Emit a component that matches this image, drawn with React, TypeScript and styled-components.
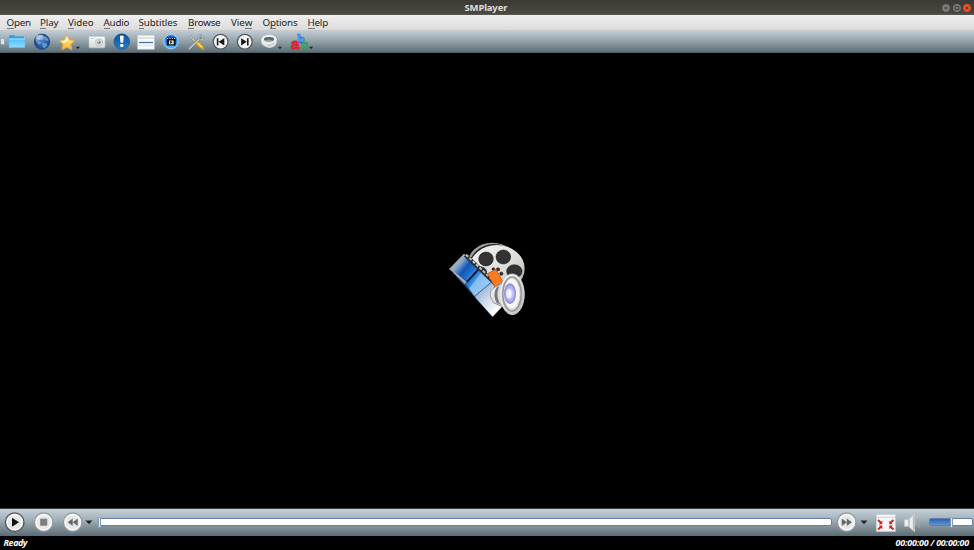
import React from "react";
import styled, { createGlobalStyle } from "styled-components";

const Global = createGlobalStyle`
  * { box-sizing: border-box; }
  body { margin: 0; background: #000; overflow: hidden; }
`;

const Window = styled.div`
  width: 974px;
  height: 550px;
  display: grid;
  grid-template-rows: 15px 16px 22px 455px 28px 14px;
  background: #000;
  font-family: "Noto Sans", "Open Sans", sans-serif;
`;
const TitleBar = styled.header`
  display: grid;
  grid-template-columns: 1fr auto 1fr;
  align-items: center;
  background: linear-gradient(#3b3934, #4a4841 88%, #5b5954);
`;
const Title = styled.h1`
  margin: 0;
  width: 45px;
  font: bold 9.5px/14px "Noto Sans", sans-serif;
  letter-spacing: -0.15px;
  white-space: nowrap;
  color: #e2ded6;
`;
const WindowButtons = styled.div`
  display: flex;
  justify-content: flex-end;
  gap: 0.5px;
  padding-right: 2px;
`;
const MenuBar = styled.nav`
  display: flex;
  padding-left: 6.5px;
  background: linear-gradient(#efefef, #dcdcdc);
  border-bottom: 1px solid #c7c9ca;
`;
const MenuItem = styled.span<{ $w: number; $ls: number }>`
  width: ${(p) => p.$w}px;
  flex: none;
  letter-spacing: ${(p) => p.$ls}px;
  font-size: 9.8px;
  line-height: 15px;
  white-space: nowrap;
  color: #1c1c1c;
`;
const Key = styled.span`
  box-shadow: 0 -1px 0 #777 inset;
  display: inline-block;
  line-height: 13px;
  height: 13px;
`;
const ToolBar = styled.div`
  display: flex;
  align-items: center;
  background: linear-gradient(#c0ccd5, #a5b2ba 30%, #5f6f77);
  border-bottom: 1px solid #4b5b63;
`;
const Grip = styled.div`
  width: 6px;
  height: 7px;
  padding: 1px 0 0 1px;
  &::before {
    content: "";
    display: block;
    width: 3px;
    height: 5px;
    background: #dfe4e7;
    border: solid #98a4ab;
    border-width: 0 1px 1px 0;
  }
`;
const ToolButton = styled.div<{ $w: number }>`
  width: ${(p) => p.$w}px;
  height: 20px;
  flex: none;
  svg { display: block; overflow: visible; }
`;
const Screen = styled.main`
  background: #000;
  padding: 183px 0 0 440px;
  svg { display: block; }
`;
const ControlBar = styled.div`
  display: flex;
  align-items: center;
  padding-left: 3px;
  border-top: 1px solid #343c41;
  background: linear-gradient(#c5d1da, #a7b4bc 35%, #5c6c74);
  svg { display: block; flex: none; }
`;
const Space = styled.div<{ $w: number }>`
  width: ${(p) => p.$w}px;
  flex: none;
`;
const SeekTrack = styled.div`
  width: 734px;
  height: 8px;
  margin-top: -1px;
  background: #fff;
  border: 1px solid #667da6;
  border-radius: 2px;
  display: flex;
  align-items: center;
  flex: none;
`;
const Thumb = styled.div`
  width: 3px;
  height: 11px;
  flex: none;
  border: 1px solid #8198b5;
  border-radius: 2px;
  background: #e3edf8;
`;
const SeekThumb = styled(Thumb)`margin-left: -1px;`;
const VolumeTrack = styled(SeekTrack)`
  width: 44px;
  background: linear-gradient(90deg, transparent 0 21px, #fff 21px), linear-gradient(#2e62ad, #5f93d8);
  padding-left: 20px;
`;
const StatusBar = styled.footer`
  display: flex;
  justify-content: space-between;
  padding: 0 5px 0 3.5px;
  color: #fff;
  font: italic bold 8.9px/13px "Noto Sans", sans-serif;
`;
const Ready = styled.span`letter-spacing: -0.4px;`;
const Time = styled.span`letter-spacing: -0.2px; white-space: pre;`;

const menus: [string, number, number, number][] = [
  ["Open", 33.5, 0, -0.25], ["Play", 28, 0, -0.15], ["Video", 35.5, 0, -0.05],
  ["Audio", 35, 0, -0.22], ["Subtitles", 49.5, 0, -0.12], ["Browse", 43, 0, -0.25],
  ["View", 31.5, 3, -0.1], ["Options", 45, 1, -0.22], ["Help", 25, 0, -0.22],
];

const Arrow = ({ x = 20 }: { x?: number }) => <path d={`M${x} 14.8h4l-2 2.5z`} fill="#20272b" />;

const Folder = () => (
  <>
    <path d="M3 4.5q0-1.2 1.2-1.2h4l1 1.2h8.8v10H3z" fill="#2f9ce4" />
    <path d="M2.3 6.5h17.4l-.8 9.2H3.2z" fill="url(#folder)" stroke="#48a8ea" strokeWidth=".5" />
    <path d="M3 7h16" stroke="#a8e4ff" />
  </>
);
const Globe = () => (
  <>
    <circle cx="11" cy="9.7" r="7.8" fill="url(#globe)" stroke="#244776" strokeWidth=".6" />
    <path d="M4 7l3-3.6 4-.8 1 2.2-3 1-1 2.4 2 2-1 2.4-2-.5-2-2.6zM13 4l3 1.2 1.8 3-2 1-1.6-1.6-1.5.4zM12 11l3.7.5.7 2-3.2 3.2-1.6-2z" fill="#90b7df" opacity=".6" />
    <ellipse cx="9" cy="5.5" rx="4" ry="2.4" fill="#fff" opacity=".5" />
  </>
);
const Star = () => (
  <>
    <path d="M11 2.5l2.5 5.2 5.4.8-4 3.9 1 5.4-4.9-2.6-5 2.6 1.1-5.4-4-3.9 5.4-.8z" fill="url(#star)" stroke="#e2a744" strokeWidth="1" strokeLinejoin="round" />
    <path d="M10.7 4.7L9 8.8l-4 .7 3 1.6 4-2.6z" fill="#fff" opacity=".7" />
    <Arrow />
  </>
);
const Camera = () => (
  <>
    <rect x="3" y="4.5" width="16" height="11.3" rx="1" fill="url(#silver)" stroke="#c4c9cc" strokeWidth=".6" />
    <rect x="4.5" y="6" width="3.5" height="1" fill="#cbd0d3" />
    <circle cx="13" cy="10.3" r="3.5" fill="#dfe1e2" stroke="#bdc1c3" />
    <circle cx="13" cy="10.3" r="1.8" fill="#85898d" />
    <circle cx="12.4" cy="9.6" r=".8" fill="#ddd" />
  </>
);
const Info = () => (
  <>
    <circle cx="10.8" cy="9.6" r="7.8" fill="url(#info)" stroke="#145597" strokeWidth=".7" />
    <path d="M8.9 4q1.9-1 3.8 0l-.5 6.3q-1.4.8-2.8 0z" fill="#fff" />
    <circle cx="10.8" cy="13.4" r="1.7" fill="#fff" />
  </>
);
const Playlist = () => (
  <>
    <rect x="2.7" y="3.2" width="16.6" height="14" fill="#f7f8fa" stroke="#c6cdd4" strokeWidth=".5" />
    <path d="M3 6h16" stroke="#c6cbd0" />
    <path d="M4 10.5h14" stroke="#416da8" strokeWidth="1.2" />
    <path d="M4 13.3h14" stroke="#dce0e4" />
  </>
);
const FilmInfo = () => (
  <>
    <circle cx="11" cy="9.7" r="7.2" fill="url(#filmDisc)" stroke="#9bd3f9" />
    <path d="M6.7 6.8l1-2 1.2 1.4 1.2-1.8 1.2 1.8 1.4-1.8 1 1.8 1.5-1 .5 1.6v6.8h-9z" fill="#071016" />
    <path d="M7.2 6.5h8.3" stroke="#fff" strokeDasharray="1 1.3" />
    <path d="M9 8.5h4.7v3.8H9z" fill="#e8f2f8" />
    <path d="M10.2 8.5l2.3 1.7-2.3 1.8z" fill="#071016" />
  </>
);
const Tools = () => (
  <>
    <path d="M4 3.4l10.4 10.2" stroke="#62686b" strokeWidth="2" />
    <path d="M4 3.4l10.4 10.2" stroke="#d9dddd" strokeWidth="1.2" />
    <path d="M4 17.3L15.5 6.2" stroke="#70777a" strokeWidth="2.4" strokeLinecap="round" />
    <path d="M4 17L15.3 6.2" stroke="#d1d5d6" strokeWidth="1.3" />
    <path d="M12.6 11.4l5 4.6" stroke="#d3a021" strokeWidth="3.4" strokeLinecap="round" />
    <path d="M12.4 10.9l4.7 4.4" stroke="#ffda4b" strokeWidth="1.7" />
    <path d="M17 2.6l-2.8 2.2.2 2.3 2.3.1L19 4.6q.5 4-3.3 4.2-3.5-.6-3-4 1-2.7 4.3-2.2z" fill="#c8cdcf" stroke="#757c80" strokeWidth=".5" />
  </>
);
const Skip = ({ next = false }: { next?: boolean }) => (
  <g transform={next ? "translate(21.8 0) scale(-1 1)" : "translate(-.4 0)"}>
    <circle cx="11" cy="9.7" r="7.4" fill="#f3f3f2" stroke="#575c5f" strokeWidth="1.3" />
    <path d="M8 6.2v7.2" stroke="#16191c" strokeWidth="1.6" />
    <path d="M14.7 6.2v7.2L9 9.8z" fill="#16191c" />
  </g>
);
const Ring = () => (
  <>
    <path d="M3.3 7.2v2.6q.7 4.2 6 5.8 4.5 1 7.5-1.5 2.2-2.3 1.7-6.9z" fill="url(#silver)" />
    <ellipse cx="11" cy="7.5" rx="7.7" ry="4.7" fill="#eceded" />
    <ellipse cx="11" cy="7.3" rx="5" ry="2.3" fill="#5b6165" />
    <path d="M7 8.4q4-2 8 0-4 2.1-8 0z" fill="#9aa1a4" />
    <path d="M10 13.2q4 .3 6.5-2" fill="none" stroke="#b2b8bb" strokeWidth=".8" />
    <Arrow />
  </>
);
const LetterA = styled.text`font: bold 15px "Liberation Sans", sans-serif;`;
const LetterB = styled.text`font: bold 13px "Liberation Serif", serif;`;
const LetterC = styled.text`font: bold 12px "Liberation Sans", sans-serif;`;
const Letters = () => (
  <>
    <LetterB x="8.2" y="10.8" fill="#78b6ff" stroke="#2369cf" strokeWidth=".7">b</LetterB>
    <LetterC x="12.2" y="16.8" fill="#60d278" stroke="#208c3a" strokeWidth=".7">c</LetterC>
    <LetterA x="2" y="17.4" fill="#f02c34" stroke="#d3202b" strokeWidth=".8">a</LetterA>
    <Arrow x={20} />
  </>
);

const tools = [
  { w: 25, icon: <Folder /> }, { w: 25, icon: <Globe /> }, { w: 30, icon: <Star /> },
  { w: 24.5, icon: <Camera /> }, { w: 24.5, icon: <Info /> }, { w: 25, icon: <Playlist /> },
  { w: 25, icon: <FilmInfo /> }, { w: 24.5, icon: <Tools /> }, { w: 24.5, icon: <Skip /> },
  { w: 24, icon: <Skip next /> }, { w: 31, icon: <Ring /> }, { w: 24, icon: <Letters /> },
];

const Defs = () => (
  <defs>
    <linearGradient id="folder" x2="0" y2="1"><stop stopColor="#4fbdfb" /><stop offset="1" stopColor="#92d9ff" /></linearGradient>
    <radialGradient id="globe"><stop stopColor="#4f88ce" /><stop offset="1" stopColor="#15458c" /></radialGradient>
    <linearGradient id="star" x2="0" y2="1"><stop stopColor="#fff4b5" /><stop offset="1" stopColor="#ffb325" /></linearGradient>
    <linearGradient id="silver" x2="0" y2="1"><stop stopColor="#fafafa" /><stop offset="1" stopColor="#d4d7d7" /></linearGradient>
    <linearGradient id="info" x2="0" y2="1"><stop stopColor="#125199" /><stop offset="1" stopColor="#1f7fc9" /></linearGradient>
    <linearGradient id="filmDisc" x2="0" y2="1"><stop stopColor="#1c6ee0" /><stop offset="1" stopColor="#55bbff" /></linearGradient>
  </defs>
);

const WinIcon = ({ kind }: { kind: "min" | "max" | "close" }) => (
  <svg width="10" height="10" viewBox="0 0 10 10">
    <circle cx="5" cy="5" r="4.3" fill={kind === "close" ? "#ee5427" : "#7c7b76"} stroke="#33312c" strokeWidth=".5" />
    {kind === "min" && <path d="M3 5h4" stroke="#3c3a35" />}
    {kind === "max" && <rect x="3.2" y="3.4" width="3.6" height="3.2" fill="none" stroke="#3c3a35" strokeWidth=".8" />}
    {kind === "close" && <path d="M3.5 3.5l3 3m0-3l-3 3" stroke="#6b2914" />}
  </svg>
);

const Logo = () => (
  <svg width="96" height="88" viewBox="0 0 288 264">
    <defs>
      <linearGradient id="reel" x2="1" y2="1"><stop stopColor="#f7f7f4" /><stop offset=".6" stopColor="#dadad7" /><stop offset="1" stopColor="#999" /></linearGradient>
      <linearGradient id="frameOne" x1="40" y1="75" x2="105" y2="128" gradientUnits="userSpaceOnUse"><stop stopColor="#d0dae2" /><stop offset=".25" stopColor="#7ba2cc" /><stop offset=".5" stopColor="#1155b6" /><stop offset=".8" stopColor="#2478d6" /><stop offset="1" stopColor="#4ba5f2" /></linearGradient>
      <linearGradient id="frameTwo" x1="83" y1="128" x2="145" y2="175" gradientUnits="userSpaceOnUse"><stop stopColor="#1466c9" /><stop offset=".25" stopColor="#3b8ee6" /><stop offset=".3" stopColor="#83bdf2" /><stop offset="1" stopColor="#a5cef5" /></linearGradient>
      <linearGradient id="frameThree" x1="110" y1="175" x2="165" y2="230" gradientUnits="userSpaceOnUse"><stop stopColor="#9bb8de" /><stop offset=".5" stopColor="#d5e0ec" /><stop offset="1" stopColor="#fff" /></linearGradient>
      <radialGradient id="cone"><stop stopColor="#fff" /><stop offset=".4" stopColor="#cccaff" /><stop offset="1" stopColor="#8b8ad5" /></radialGradient>
      <linearGradient id="speaker" x2="1" y2="1"><stop stopColor="#fff" /><stop offset="1" stopColor="#b8b8b8" /></linearGradient>
    </defs>
    <ellipse cx="157" cy="86" rx="75" ry="66" fill="#a0a09d" />
    <ellipse cx="163" cy="90" rx="75" ry="66" fill="#222" />
    <ellipse cx="171" cy="98" rx="83" ry="71" fill="url(#reel)" />
    <g fill="#323332" stroke="#111" strokeWidth="1.5">
      <ellipse cx="138" cy="69" rx="22" ry="21" />
      <ellipse cx="190" cy="63" rx="22" ry="21" />
      <ellipse cx="223" cy="106" rx="23" ry="20" />
      <ellipse cx="120" cy="108" rx="20" ry="16" />
      <circle cx="174" cy="100" r="5" /><circle cx="184" cy="113" r="5" /><circle cx="160" cy="99" r="4" />
    </g>
    <path d="M72 53L178 151l-22 91L28 99z" fill="#2d4468" />
    <path d="M72 54l44 42-33 39-55-36z" fill="url(#frameOne)" />
    <path d="M28 99l44-45 6 5-41 43 44 36-6 7z" fill="#a1abb4" />
    <path d="M83 135l33-39 44 44-55 44-30-44z" fill="url(#frameTwo)" />
    <path d="M160 140l39 59-41 43-56-62z" fill="url(#frameThree)" />
    <path d="M81 138l39-43" stroke="#09101a" strokeWidth="5" />
    <path d="M103 182l60-51" stroke="#445e82" strokeWidth="3" />
    <path d="M76 57l91 87" stroke="#282d32" strokeWidth="12" />
    <path d="M78 56l89 85" stroke="#c3c7c8" strokeWidth="6" strokeDasharray="9 5" />
    <path d="M34 105l72 79" stroke="#1f2b3c" strokeWidth="3" strokeDasharray="8 6" />
    <path d="M142 113l26-13 20 36-23 18z" fill="#ff7a22" stroke="#a94717" strokeWidth="2" />
    <path d="M159 157q-17 15 1 43l37 17 10-88z" fill="url(#speaker)" stroke="#777" strokeWidth="2" />
    <path d="M169 155q-12 20 1 46l20 7V142z" fill="#77777a" />
    <path d="M178 150q-12 24 0 50l22 18V135z" fill="#dadada" />
    <ellipse cx="217" cy="175" rx="36" ry="61" fill="url(#speaker)" stroke="#eee" strokeWidth="2" />
    <ellipse cx="216" cy="174" rx="28" ry="51" fill="#dcdce0" stroke="#99999e" strokeWidth="5" />
    <ellipse cx="215" cy="173" rx="23" ry="44" fill="#f7f7fa" />
    <ellipse cx="210" cy="173" rx="18" ry="31" fill="url(#cone)" />
    <ellipse cx="206" cy="173" rx="8" ry="14" fill="#fff" opacity=".65" />
  </svg>
);

const RoundIcon = ({ kind }: { kind: "play" | "stop" | "rewind" | "forward" }) => (
  <svg width="23" height="23" viewBox="0 0 23 23">
    <circle cx="11.7" cy="11.2" r="9.3" fill="#f0f0ef" stroke={kind === "play" ? "#50575b" : "#91999c"} strokeWidth="1.4" />
    <circle cx="11.7" cy="11.2" r="7.5" fill="#e7e8e7" stroke="#fff" />
    {kind === "play" && <path d="M9 6.8v9l7-4.5z" fill="#101315" />}
    {kind === "stop" && <rect x="8.2" y="7.7" width="7" height="7" fill="#7b7e80" />}
    {kind === "rewind" && <path d="M11.7 7.5v7.4l-5-3.7zm5 0v7.4l-5-3.7z" fill="#65696b" />}
    {kind === "forward" && <path d="M6.8 7.5v7.4l5-3.7zm5 0v7.4l5-3.7z" fill="#65696b" />}
  </svg>
);
const DropArrow = () => <svg width="8" height="6" viewBox="0 0 8 6"><path d="M.5.5h7L4 4.3z" fill="#20272b" /></svg>;

export default function App() {
  return (
    <Window>
      <Global />
      <TitleBar>
        <span />
        <Title>SMPlayer</Title>
        <WindowButtons><WinIcon kind="min" /><WinIcon kind="max" /><WinIcon kind="close" /></WindowButtons>
      </TitleBar>
      <MenuBar>
        {menus.map(([label, w, key, ls]) => (
          <MenuItem key={label} $w={w} $ls={ls}>
            {label.slice(0, key)}<Key>{label[key]}</Key>{label.slice(key + 1)}
          </MenuItem>
        ))}
      </MenuBar>
      <ToolBar>
        <Grip />
        {tools.map((t, i) => (
          <ToolButton key={i} $w={t.w}>
            <svg width="22" height="20" viewBox="0 0 22 20">{i === 0 && <Defs />}{t.icon}</svg>
          </ToolButton>
        ))}
      </ToolBar>
      <Screen><Logo /></Screen>
      <ControlBar>
        <RoundIcon kind="play" /><Space $w={6} />
        <RoundIcon kind="stop" /><Space $w={6} />
        <RoundIcon kind="rewind" /><Space $w={1} />
        <DropArrow /><Space $w={5} />
        <SeekTrack><SeekThumb /></SeekTrack><Space $w={3} />
        <RoundIcon kind="forward" /><Space $w={1.5} />
        <DropArrow /><Space $w={8.5} />
        <svg width="20" height="18" viewBox="0 0 20 18">
          <rect x=".3" y=".5" width="19" height="17" fill="#f7f7f8" stroke="#c5cbd0" strokeWidth=".6" />
          <path d="M.5 3.3h19" stroke="#cfd1d4" />
          <path d="M2 6l3 2.8m12.5-2.8l-3 2.8M2 15.6l3-2.8m12.5 2.8l-3-2.8" stroke="#cc2429" strokeWidth="2" />
          <path d="M6.3 6.5v3.8H2.8zM13.3 6.5v3.8h3.5zM6.3 15.3v-3.8H2.8zM13.3 15.3v-3.8h3.5z" fill="#cc2429" />
        </svg>
        <Space $w={7} />
        <svg width="19" height="20" viewBox="0 0 19 20">
          <path d="M1.5 6.7h4l6-5.4v17.4l-6-5.4h-4z" fill="#eceeee" stroke="#c6cbcd" strokeWidth=".7" />
          <path d="M6 6.5v7" stroke="#9ca3a6" />
          <path d="M9.8 4v12l1.5 2V2z" fill="#b7bdbf" />
          <path d="M13 7q2 3.5 0 6m2.3-8q3.4 5 0 10" fill="none" stroke="#a9b3b8" strokeWidth=".8" />
        </svg>
        <Space $w={6.5} />
        <VolumeTrack><Thumb /></VolumeTrack>
      </ControlBar>
      <StatusBar><Ready>Ready</Ready><Time>00:00:00 / 00:00:00</Time></StatusBar>
    </Window>
  );
}
